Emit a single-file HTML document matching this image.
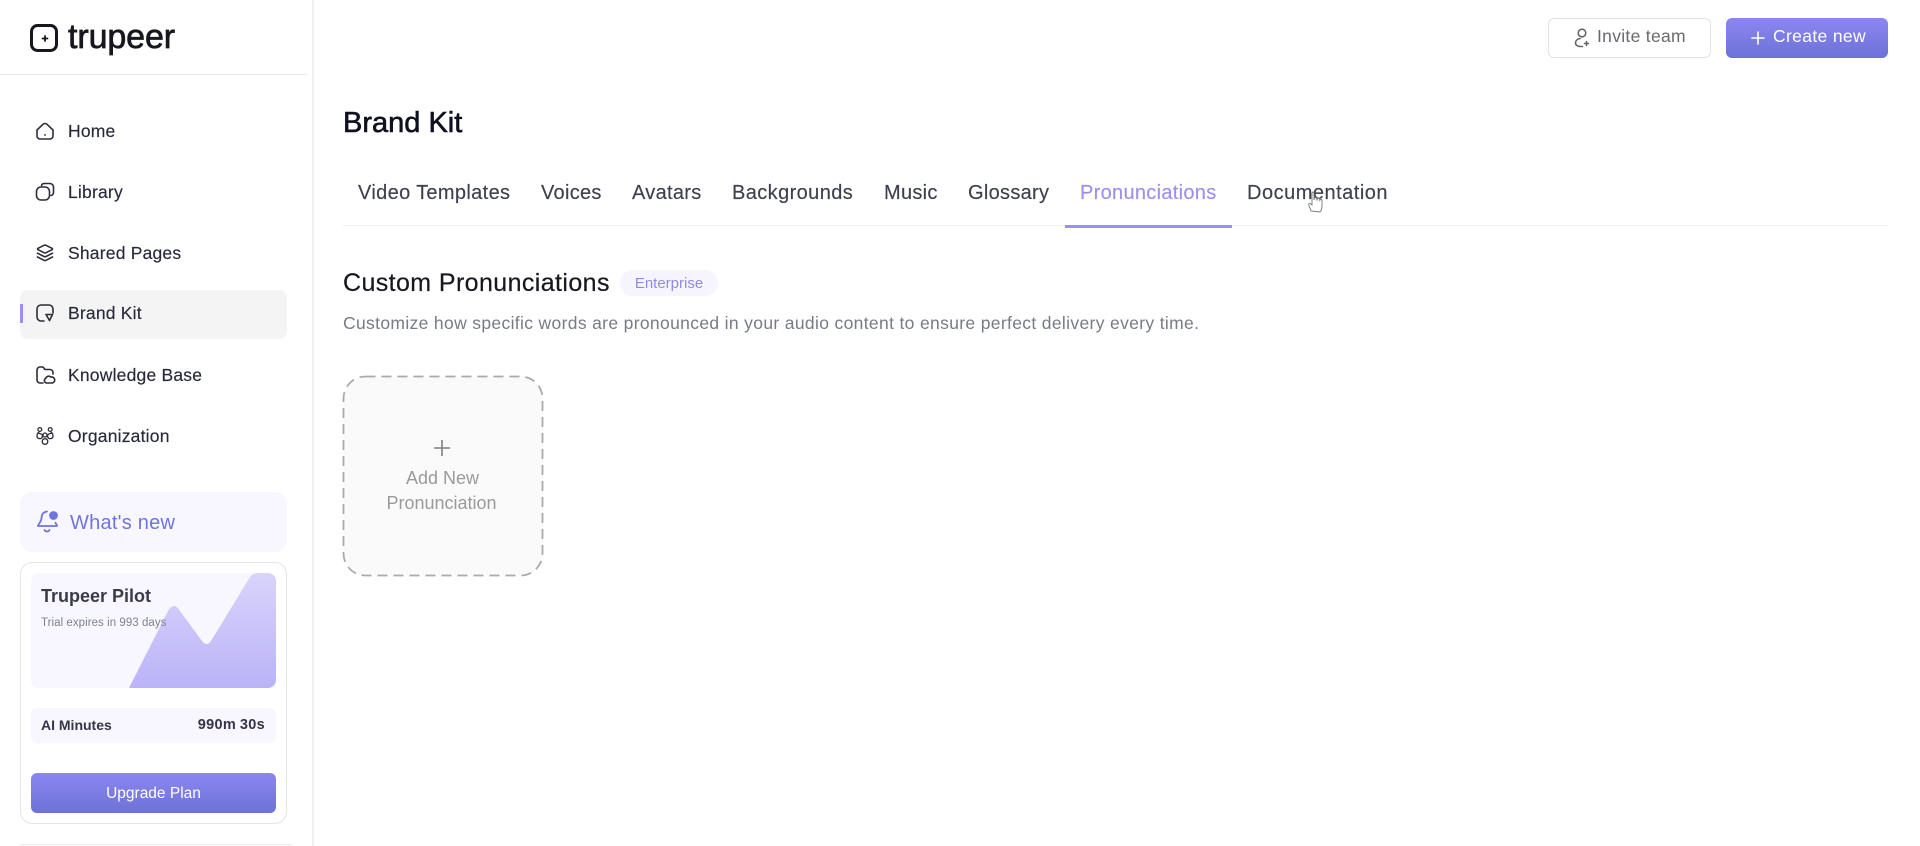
<!DOCTYPE html>
<html lang="en"><head><meta charset="utf-8"><title>Brand Kit</title>
<style>
*{box-sizing:border-box;margin:0;padding:0}
html,body{width:1920px;height:846px;overflow:hidden;background:#fff;font-family:"Liberation Sans",sans-serif}
.a{position:absolute;white-space:nowrap;line-height:1}
.ic{position:absolute;overflow:visible;fill:none;stroke:#2b2d3a;stroke-width:1.6;stroke-linecap:round;stroke-linejoin:round}
.nav{left:68px;font-size:17.5px;color:#27293a;letter-spacing:.2px;-webkit-text-stroke:.15px #27293a}
.tab{top:183px;font-size:20px;color:#3d404d;letter-spacing:.3px;-webkit-text-stroke:.15px currentColor}
.btn{position:absolute;border-radius:6px;background:linear-gradient(#8c86f2,#6c72d6)}
</style></head><body>

<div class="a" style="left:312px;top:0;width:1.5px;height:846px;background:#f0f0f2"></div>
<div class="a" style="left:0;top:74px;width:307px;height:1px;background:#e8e8e8"></div>

<svg class="ic" style="left:30px;top:24px;stroke:#17181f;stroke-width:3" width="28" height="28" viewBox="0 0 28 28"><rect x="1.5" y="1.5" width="25" height="25" rx="6"/><path d="M17.500 14.500h-5M15 12v5" stroke-width="1.800"/></svg>
<div class="a" style="left:68px;top:20px;font-size:34px;color:#17181f;letter-spacing:-.1px;-webkit-text-stroke:.7px #17181f">trupeer</div>

<svg class="ic" style="left:36px;top:122px" width="18" height="18" viewBox="0 0 18 18"><path d="M1 8L7 2.300a3 3 0 0 1 4 0L17 8V14a3 3 0 0 1-3 3H4a3 3 0 0 1-3-3z"/><path d="M9 12.800v.3"/></svg>
<div class="a nav" style="top:123px">Home</div>
<svg class="ic" style="left:36px;top:183px" width="18" height="18" viewBox="0 0 18 18"><rect x=".5" y="4" width="13" height="13" rx="4.500"/><path d="M5.500 2.500A3 3 0 0 1 8.500 .5H14a3.500 3.500 0 0 1 3.500 3.500v5.500a3 3 0 0 1-2.500 3"/></svg>
<div class="a nav" style="top:184px">Library</div>
<svg class="ic" style="left:36px;top:244px" width="18" height="18" viewBox="0 0 18 18"><path d="M8 1.300a2.500 2.500 0 0 1 2 0l6 3q1 .7 0 1.400l-6 3a2.500 2.500 0 0 1-2 0l-6-3q-1-.7 0-1.400z"/><path d="M1.500 9.200L8 12.500a2.500 2.500 0 0 0 2 0l6.500-3.300M1.500 13L8 16.300a2.500 2.500 0 0 0 2 0l6.500-3.300"/></svg>
<div class="a nav" style="top:245px">Shared Pages</div>

<div class="a" style="left:20px;top:290px;width:267px;height:49px;background:#f4f4f4;border-radius:8px"></div>
<div class="a" style="left:20px;top:304px;width:3px;height:19px;background:#9a90f0"></div>
<svg class="ic" style="left:36px;top:304px" width="18" height="18" viewBox="0 0 18 18"><path d="M8 17H5a4 4 0 0 1-4-4V5a4 4 0 0 1 4-4h8a4 4 0 0 1 4 4v4"/><path d="M10 10.500l6.500 0-3 6z"/></svg>
<div class="a nav" style="top:305px">Brand Kit</div>

<svg class="ic" style="left:36px;top:366px" width="18" height="18" viewBox="0 0 18 18"><path d="M7 17H4a3 3 0 0 1-3-3V4a3 3 0 0 1 3-3h3l2 2.500h5a3 3 0 0 1 3 3V8"/><path d="M10.500 17a2.500 2.500 0 0 1-.7-4.700 3 3 0 0 1 5-1.200 3 3 0 0 1 1.700 5.900z"/></svg>
<div class="a nav" style="top:367px">Knowledge Base</div>
<svg class="ic" style="left:36px;top:427px;stroke-width:1.300" width="18" height="18" viewBox="0 0 18 18"><circle cx="3.800" cy="2.500" r="1.900"/><path d="M3 5.200C1 6 1 8 1 9.500S3 12 5 11.500c1-.5 1.500-1.500 1.500-2.500S5.500 6.500 3 6.500"/><circle cx="14.200" cy="2.500" r="1.900"/><path d="M15 5.200C17 6 17 8 17 9.500S15 12 13 11.500c-1-.5-1.500-1.500-1.500-2.500S12.500 6.500 15 6.500"/><circle cx="9" cy="8" r="2"/><circle cx="9" cy="14.500" r="2.800"/></svg>
<div class="a nav" style="top:428px">Organization</div>

<div class="a" style="left:20px;top:492px;width:267px;height:60px;background:#f8f7ff;border-radius:12px"></div>
<svg class="ic" style="left:37px;top:510px;stroke:#6f74dc;stroke-width:1.800" width="22" height="24" viewBox="0 0 22 24"><path d="M10 1.500C6 2 4.500 5 4.500 8c0 4-3.500 6-3.500 8h19c0-1.200-.8-2.200-1.600-3.200"/><path d="M7.500 20c1 2 4 2 5 0"/><circle cx="16.500" cy="5.500" r="3.500" fill="#6f74dc"/></svg>
<div class="a" style="left:70px;top:513px;font-size:20px;color:#6f74dc;letter-spacing:.25px">What's new</div>

<div class="a" style="left:20px;top:562px;width:267px;height:262px;border:1.500px solid #e4e4e6;border-radius:12px;background:#fff"></div>
<svg class="a" style="left:31px;top:573px" width="245" height="115" viewBox="0 0 245 115"><defs><linearGradient id="g" x1="0" y1="0" x2="0" y2="1"><stop offset="0" stop-color="#d9d4fc"/><stop offset="1" stop-color="#bab3f7"/></linearGradient><clipPath id="c"><rect width="245" height="115" rx="8"/></clipPath></defs><g clip-path="url(#c)"><rect width="245" height="115" fill="#f8f7ff"/><path d="M98 115L137 38Q143 28 149 38L171 68Q176 74 180 68L219 4Q222 0 228 0H245V115Z" fill="url(#g)"/></g></svg>
<div class="a" style="left:41px;top:587px;font-size:18px;font-weight:700;color:#3a3b4a">Trupeer Pilot</div>
<div class="a" style="left:41px;top:618px;font-size:11.500px;color:#7d808f;letter-spacing:.05px">Trial expires in 993 days</div>
<div class="a" style="left:31px;top:708px;width:245px;height:35px;background:#f8f7ff;border-radius:6px"></div>
<div class="a" style="left:41px;top:718px;font-size:14px;font-weight:700;color:#34354a">AI Minutes</div>
<div class="a" style="right:1655px;top:718px;font-size:14.500px;font-weight:700;color:#34354a;letter-spacing:.3px;word-spacing:-.5px">990m 30s</div>
<div class="btn" style="left:31px;top:773px;width:245px;height:40px"></div>
<div class="a" style="left:31px;width:245px;text-align:center;top:786px;font-size:15.500px;color:#fff">Upgrade Plan</div>
<div class="a" style="left:20px;top:844px;width:272px;height:1px;background:#ececec"></div>

<div class="a" style="left:1548px;top:18px;width:163px;height:40px;border:1.500px solid #e2e2e2;border-radius:6px;background:#fff"></div>
<svg class="ic" style="left:1574px;top:28px;stroke:#666;stroke-width:1.600" width="16" height="20" viewBox="0 0 16 20"><circle cx="8" cy="5" r="3.800"/><path d="M6 10.500C3 11 1.500 13 1.500 15c0 2 2 3.500 5 3.500h2M12.500 13.500v4M10.500 15.500h4"/></svg>
<div class="a" style="left:1597px;top:28px;font-size:17.500px;color:#68696f;letter-spacing:.3px">Invite team</div>
<div class="btn" style="left:1726px;top:18px;width:162px;height:40px"></div>
<svg class="ic" style="left:1751px;top:31px;stroke:#fff;stroke-width:1.600" width="14" height="14" viewBox="0 0 14 14"><path d="M7 1v12M1 7h12"/></svg>
<div class="a" style="left:1773px;top:28px;font-size:17.500px;color:#fff;letter-spacing:.35px">Create new</div>

<div class="a" style="left:343px;top:109px;font-size:29px;color:#0f1020;-webkit-text-stroke:.6px #0f1020">Brand Kit</div>

<div class="a tab" style="left:358px;letter-spacing:.35px">Video Templates</div>
<div class="a tab" style="left:541px">Voices</div>
<div class="a tab" style="left:632px">Avatars</div>
<div class="a tab" style="left:732px;letter-spacing:.4px">Backgrounds</div>
<div class="a tab" style="left:884px">Music</div>
<div class="a tab" style="left:968px">Glossary</div>
<div class="a tab" style="left:1080px;color:#9a90ee">Pronunciations</div>
<div class="a tab" style="left:1247px;letter-spacing:.5px">Documentation</div>
<div class="a" style="left:343px;top:225px;width:1545px;height:1px;background:#eceef2"></div>
<div class="a" style="left:1065px;top:225px;width:167px;height:3px;background:#9a90ee"></div>
<svg class="a" style="left:1308px;top:190px;overflow:visible" width="16" height="24" viewBox="0 0 16 24"><path d="M3 21L.8 15q-.5-2 1.500-1.500L4 15V3q1-2 2 0v7l.5-2q1-1 2 0l.5 2 .5-1.500q1-1 2 0l.3 2 .7-1q1.500-.5 1.500 1v5q0 4-2 6.500z" fill="#fff" fill-opacity=".6" stroke="#777" stroke-width=".9"/></svg>

<div class="a" style="left:343px;top:271px;font-size:25px;color:#17181f;letter-spacing:.4px;-webkit-text-stroke:.2px #17181f">Custom Pronunciations</div>
<div class="a" style="left:620px;top:270px;width:98px;height:26px;border-radius:13px;background:#f6f5ff"></div>
<div class="a" style="left:620px;width:98px;text-align:center;top:276px;font-size:15px;color:#8f8be0">Enterprise</div>
<div class="a" style="left:343px;top:315px;font-size:17.500px;color:#777b86;letter-spacing:.34px">Customize how specific words are pronounced in your audio content to ensure perfect delivery every time.</div>

<svg class="a" style="left:342px;top:375px" width="202" height="202" viewBox="0 0 202 202"><rect x="1.500" y="1.500" width="199" height="199" rx="22" fill="#fafafa" stroke="#aaa" stroke-width="1.800" stroke-dasharray="10 6"/><path d="M100 65v16M92 73h16" stroke="#8e8e8e" stroke-width="1.800"/></svg>
<div class="a" style="left:343px;width:199px;text-align:center;top:469px;font-size:18px;color:#9a9a9a">Add New</div>
<div class="a" style="left:342px;width:199px;text-align:center;top:494px;font-size:18px;color:#9a9a9a">Pronunciation</div>
</body></html>
